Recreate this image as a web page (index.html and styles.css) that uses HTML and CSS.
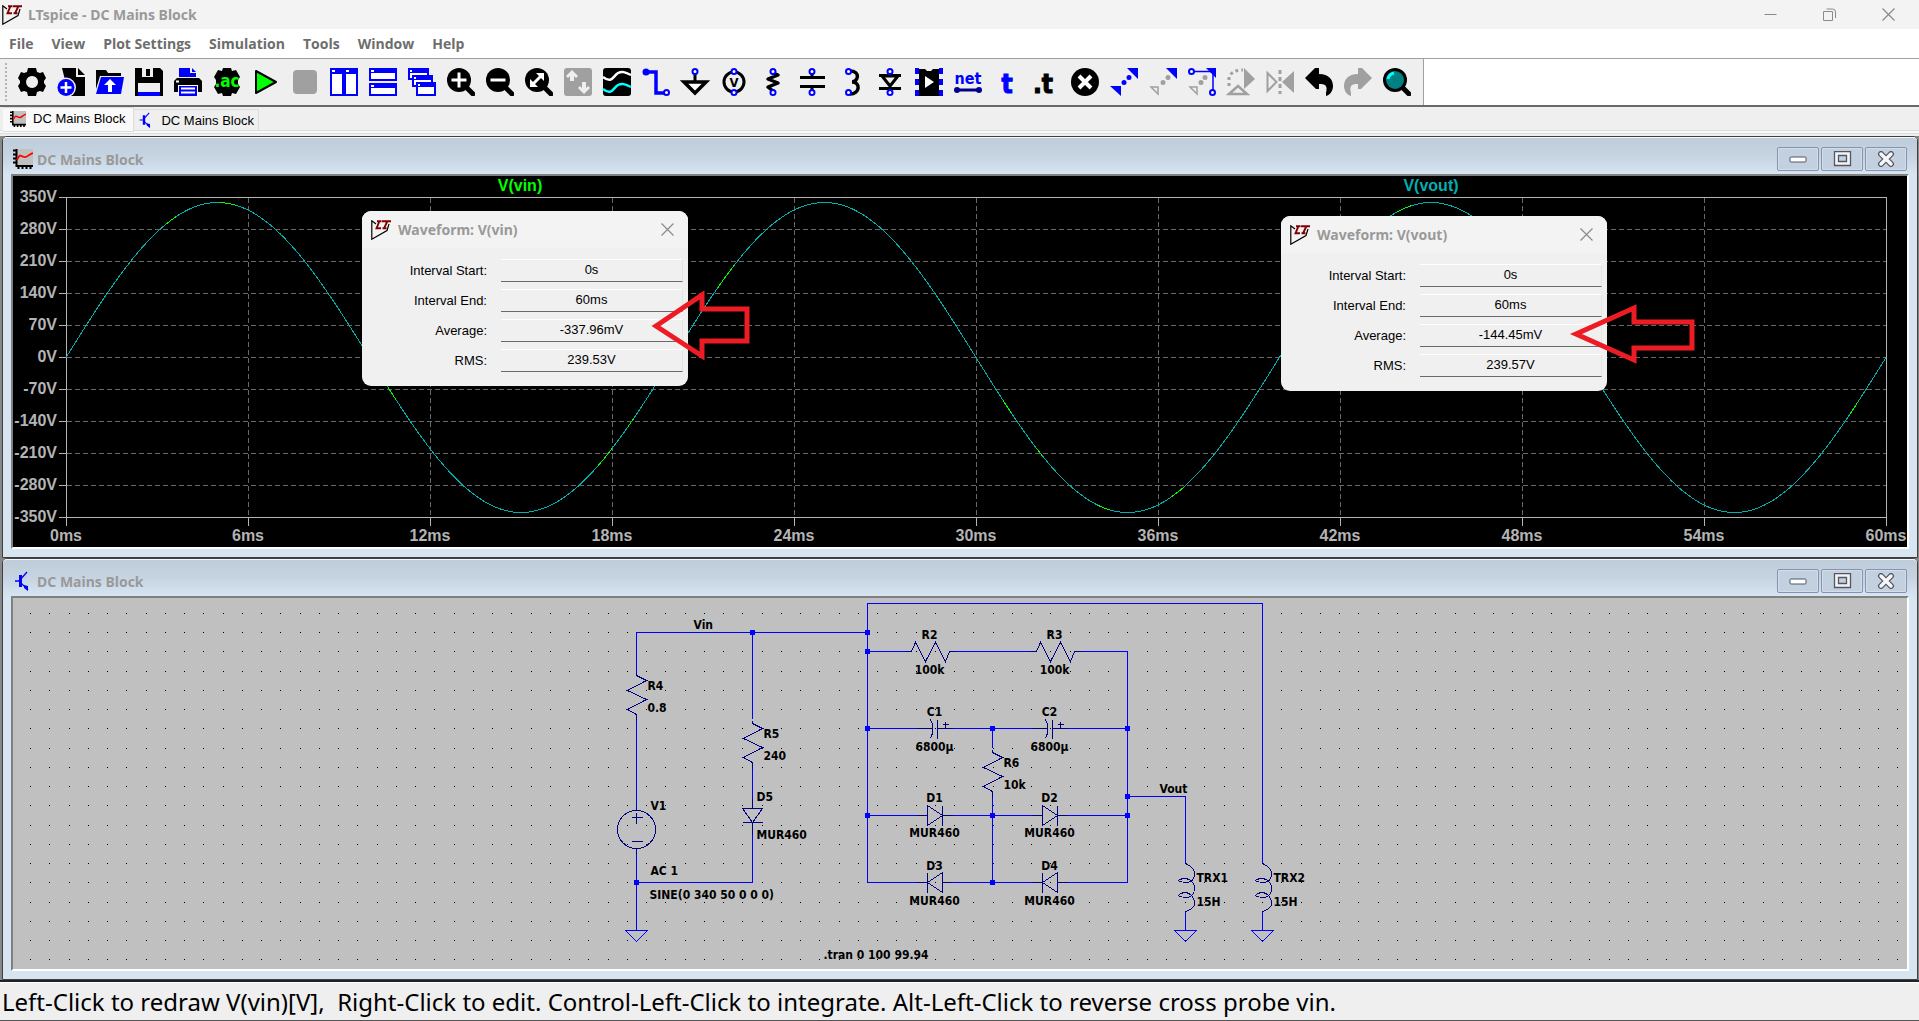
FILE: index.html
```html
<!DOCTYPE html>
<html lang="en">
<head>
  <meta charset="UTF-8">
  <meta name="viewport" content="width=device-width, initial-scale=1.0">
  <title>LTspice - DC Mains Block</title>
  <link rel="stylesheet" href="styles.css">
</head>
<body>
  <!-- Shared symbols -->
  <svg class="defs" width="0" height="0" aria-hidden="true">
    <symbol id="logo" viewBox="0 0 20 20">
      <path d="M5 4L.8.8V19.2L16 10.500 18 4" fill="none" stroke="#000" stroke-width="1.200"/>
      <path d="M6 1.200h4M8.500 1L5.500 8.300H10M10.500 1.200H20M16.500 1L13 8.300M11.500 8.300h4" fill="none" stroke="#800000" stroke-width="1.900"/>
    </symbol>
    <symbol id="icon-wave" viewBox="0 0 20 20">
      <path fill="#c0c0c0" d="M3 0h17v17H3z"/>
      <path d="M3.500 0v17H20M0 1.500h3M0 5.500h3M0 9.500h3M0 13.500h3M5.500 17v3M9.500 17v3M13.500 17v3M17.500 17v3" fill="none" stroke="#000" stroke-width="2"/>
      <path d="M4 11c3-7 4-4 7-3s5-3 9-4" fill="none" stroke="#f00" stroke-width="1.800"/>
    </symbol>
    <symbol id="icon-bjt" viewBox="0 0 20 20">
      <path d="M2 10h5M7 9l7-8M7 11l8 8" fill="none" stroke="#00f" stroke-width="1.300"/>
      <path d="M6 4h3v12H6zM11 14l4 1v5l-4-3z" fill="#00f"/>
    </symbol>
    <symbol id="icon-min" viewBox="0 0 20 16">
      <rect x="2" y="6" width="16" height="5" rx="1" fill="#fff" stroke="#535666"/>
    </symbol>
    <symbol id="icon-max" viewBox="0 0 20 16">
      <path d="M2.500.5h16v14h-16zM6.500 4.500v6h8v-6z" fill="#f4f4f4" fill-rule="evenodd" stroke="#535666" stroke-width="1.300"/>
    </symbol>
    <symbol id="icon-close" viewBox="0 0 20 16">
      <path d="M5 3l10 10M15 3L5 13" stroke="#535666" stroke-width="6" stroke-linecap="round"/>
      <path d="M5 3l10 10M15 3L5 13" stroke="#f7f7f7" stroke-width="3.500" stroke-linecap="round"/>
    </symbol>
    <symbol id="icon-x" viewBox="0 0 13 13">
      <path d="M.5.5l12 12M12.500.5l-12 12" stroke="#8a8a8a" stroke-width="1.200"/>
    </symbol>
    <symbol id="lens" viewBox="0 0 28 28">
      <path d="M18 18l8 8" stroke="#000" stroke-width="5" stroke-linecap="round"/>
      <circle cx="12" cy="12" r="12"/>
    </symbol>
  </svg>

  <header class="titlebar">
    <svg class="logo"><use href="#logo"/></svg>
    <h1>LTspice - DC Mains Block</h1>
    <div class="window-controls">
      <button aria-label="Minimize"><svg width="13" height="13"><path d="M.5 6.500h12" stroke="#8a8a8a"/></svg></button>
      <button aria-label="Restore"><svg width="13" height="13"><path d="M.5 3.500h9v9h-9zM3.500 1h6q3 0 3 3v6" fill="none" stroke="#8a8a8a"/></svg></button>
      <button aria-label="Close"><svg width="13" height="13"><use href="#icon-x"/></svg></button>
    </div>
  </header>

  <nav class="menubar">
    <button>File</button>
    <button>View</button>
    <button>Plot Settings</button>
    <button>Simulation</button>
    <button>Tools</button>
    <button>Window</button>
    <button>Help</button>
  </nav>

  <div class="toolbar-row">
    <div class="toolbar" role="toolbar" aria-label="Main toolbar">
      <button aria-label="Settings"><svg viewBox="0 0 28 28"><path fill-rule="evenodd" d="M10 0h8l1 4 3 1 3-1 3 6-2 3v2l2 3-3 6-3-1-3 1-1 4h-8l-1-4-3-1-3 1-3-6 2-3v-2l-2-3 3-6 3 1 3-1zM14 8a6 6 0 1 0 .1 0z"/></svg></button>
      <button aria-label="New schematic"><svg viewBox="0 0 28 28"><path d="M5 0h14v9h9v19H12z M21 0l7 7h-7z"/><circle cx="9" cy="19.500" r="10" fill="#efefef"/><circle cx="9" cy="19.500" r="8.500" fill="#00f"/><path d="M9 14v11M3.500 19.500h11" stroke="#fff" stroke-width="2.500"/></svg></button>
      <button aria-label="Open"><svg viewBox="0 0 28 28"><path d="M0 2h10l2 3h13v3H4L0 21z"/><path d="M5 9h23l-3 17H0z" fill="#00f"/><path d="M14 11l6 6h-4v7h-4v-7H8z" fill="#fff"/></svg></button>
      <button aria-label="Save"><svg viewBox="0 0 28 28"><path d="M0 0h25l3 3v25H0z"/><path d="M7 0h11v9H7zM3 15h22v10H3z" fill="#efefef"/><path d="M11 1h4v7h-4z"/><path fill="#00f" d="M3 24h22v4H3z"/></svg></button>
      <button aria-label="Print"><svg viewBox="0 0 28 28"><path d="M5 0h11v5h6v4H5zM18 0l4 4h-4z" fill="#00f"/><path d="M3 10h22l3 3v11H0V13z"/><path d="M4 17h20v11H4z" fill="#fff"/><path d="M5 18h18v10H5z" fill="#00f"/><path d="M7 20.500h14M7 24.500h14M2 13.500h3" stroke="#fff" stroke-width="2"/></svg></button>
      <button aria-label="Configure analysis"><svg viewBox="0 0 28 28"><path d="M10 0h8l1 3 4-1 4 7-2 3v4l2 3-4 7-4-1-1 3h-8l-1-3-4 1-4-7 2-3v-4l-2-3 4-7 4 1z"/><text x="14" y="19" class="icon-ac">.ac</text></svg></button>
      <button aria-label="Run"><svg viewBox="0 0 28 28"><path d="M4 3l20 11L4 25z" fill="#0f0" stroke="#000" stroke-width="2" stroke-linejoin="round"/></svg></button>
      <button aria-label="Stop" disabled><svg viewBox="0 0 28 28"><rect x="2" y="2" width="24" height="24" rx="4" fill="#a0a0a0"/></svg></button>
      <button aria-label="Tile vertically"><svg viewBox="0 0 28 28"><path d="M1 1h12v26H1zM15 1h12v26H15z" fill="#fff" stroke="#00f" stroke-width="2"/><path d="M1 1h12v5H1zM15 1h12v5H15z" fill="#00f"/><path d="M2 3h3M16 3h3" stroke="#fff" stroke-width="2"/></svg></button>
      <button aria-label="Tile horizontally"><svg viewBox="0 0 28 28"><path d="M1 1h26v11H1zM1 16h26v11H1z" fill="#fff" stroke="#00f" stroke-width="2"/><path d="M1 1h26v4H1zM1 16h26v4H1z" fill="#00f"/><path d="M2 3h3M2 18h3" stroke="#fff" stroke-width="2"/></svg></button>
      <button aria-label="Cascade"><svg viewBox="0 0 28 28"><g fill="#fff" stroke="#00f" stroke-width="2"><path d="M1 1h19v10H1zM5 8h19v10H5zM9 15h18v12H9z"/></g><path d="M1 1h19v4H1zM5 8h19v4H5zM9 15h18v4H9z" fill="#00f"/><path d="M2 3h2M6 10h2M10 17h2" stroke="#fff" stroke-width="2"/></svg></button>
      <button aria-label="Zoom in"><svg viewBox="0 0 28 28"><use href="#lens"/><path d="M12 4.500v15M4.500 12h15" stroke="#fff" stroke-width="3"/></svg></button>
      <button aria-label="Zoom out"><svg viewBox="0 0 28 28"><use href="#lens"/><path d="M4.500 12h15" stroke="#fff" stroke-width="3"/></svg></button>
      <button aria-label="Zoom to fit"><svg viewBox="0 0 28 28"><use href="#lens"/><path d="M11 5h8v8zM5 11v8h8z" fill="#fff"/><path d="M8 16l8-8" stroke="#fff" stroke-width="3"/></svg></button>
      <button aria-label="Autorange" disabled><svg viewBox="0 0 28 28"><rect width="28" height="28" rx="3" fill="#a0a0a0"/><path d="M8 2l6 6-2 2-2-2v5H6V8l-2 2-2-2zM20 26l6-6-2-2-2 2v-6h-4v6l-2-2-2 2z" fill="#efefef"/></svg></button>
      <button aria-label="Waveform"><svg viewBox="0 0 28 28"><rect width="28" height="28" rx="3"/><path d="M0 9c9 7 10-1 15-4 4-2 7-1 13 2" fill="none" stroke="#fff" stroke-width="2.500"/><path d="M0 21c9 7 10-1 15-4 4-2 7-1 13 2" fill="none" stroke="#0ff" stroke-width="2.500"/></svg></button>
      <button aria-label="Wire"><svg viewBox="0 0 28 28"><path d="M4 4h10v21h9" fill="none" stroke="#00f" stroke-width="3.500"/><circle cx="4" cy="4" r="3.500" fill="#00f"/><circle cx="24.500" cy="24.500" r="2.500" class="pin"/></svg></button>
      <button aria-label="Ground"><svg viewBox="0 0 28 28"><path d="M14 5v9" stroke="#000" stroke-width="3"/><path d="M3 14h22L14 25z" fill="#fff" stroke="#000" stroke-width="3.500"/><circle cx="14" cy="3.500" r="2.500" class="pin"/></svg></button>
      <button aria-label="Voltage source"><svg viewBox="0 0 28 28"><circle cx="14" cy="14" r="10" fill="none" stroke="#000" stroke-width="3"/><text x="14" y="19" class="icon-v">V</text><circle cx="14" cy="3.500" r="2.500" class="pin"/><circle cx="14" cy="24.500" r="2.500" class="pin"/></svg></button>
      <button aria-label="Resistor"><svg viewBox="0 0 28 28"><path d="M14 5l5 2-10 4 10 4-10 4 5 4" fill="none" stroke="#000" stroke-width="3.500" stroke-linejoin="round"/><circle cx="14" cy="3.500" r="2.500" class="pin"/><circle cx="14" cy="24.500" r="2.500" class="pin"/></svg></button>
      <button aria-label="Capacitor"><svg viewBox="0 0 28 28"><path d="M14 5v5M14 18v5M2 9.500h25M2 18.500h25" stroke="#000" stroke-width="3"/><circle cx="14" cy="3.500" r="2.500" class="pin"/><circle cx="14" cy="24.500" r="2.500" class="pin"/></svg></button>
      <button aria-label="Inductor"><svg viewBox="0 0 28 28"><path d="M13 3c11 0 8 11 2 11 9 0 8 12-2 12" fill="none" stroke="#000" stroke-width="3.500"/><circle cx="11.500" cy="3.500" r="2.500" class="pin"/><circle cx="11.500" cy="24.500" r="2.500" class="pin"/></svg></button>
      <button aria-label="Diode"><svg viewBox="0 0 28 28"><path d="M3 7.500h22M3 20.500h22" stroke="#000" stroke-width="3"/><path d="M6 8h16l-8 10z" fill="#efefef" stroke="#000" stroke-width="3"/><circle cx="14" cy="3.500" r="2.500" class="pin"/><circle cx="14" cy="24.500" r="2.500" class="pin"/></svg></button>
      <button aria-label="Component"><svg viewBox="0 0 28 28"><path d="M2 0v28M26 0v28" stroke="#00f" stroke-width="4" stroke-dasharray="6 5"/><path d="M4 1h6l2 2h4l2-2h6v27H4z"/><path d="M10 8l9 6-9 6z" fill="#fff"/></svg></button>
      <button aria-label="Net name"><svg viewBox="0 0 28 28"><text x="14" y="16" class="icon-net">net</text><path d="M3 22h22" stroke="#00008b" stroke-width="3"/><circle cx="3" cy="22" r="3" fill="#00008b"/><circle cx="25" cy="22" r="3" fill="#00008b"/></svg></button>
      <button aria-label="Text"><svg viewBox="0 0 28 28"><text x="14" y="25" class="icon-t blue">t</text></svg></button>
      <button aria-label="SPICE directive"><svg viewBox="0 0 28 28"><text x="11" y="25" class="icon-t">.t</text></svg></button>
      <button aria-label="Delete"><svg viewBox="0 0 28 28"><circle cx="14" cy="14" r="14"/><path d="M8 8l12 12M20 8L8 20" stroke="#fff" stroke-width="4"/></svg></button>
      <button aria-label="Duplicate"><svg viewBox="0 0 28 28"><path d="M17 0h11v11zM0 18h11v10z" fill="#00f"/><g fill="#00f"><circle cx="19" cy="9.500" r="2.500"/><circle cx="14" cy="14.500" r="2.500"/></g></svg></button>
      <button aria-label="Move"><svg viewBox="0 0 28 28"><path d="M17 0h11v11z" fill="#00f"/><path d="M2 19h7v7z" fill="none" stroke="#a0a0a0" stroke-width="1.500"/><g fill="#a0a0a0"><circle cx="19" cy="9.500" r="2.500"/><circle cx="14" cy="14.500" r="2.500"/></g></svg></button>
      <button aria-label="Drag"><svg viewBox="0 0 28 28"><path d="M18 0h10v10z" fill="#00f"/><path d="M4 3.500h21v20" fill="none" stroke="#00f" stroke-width="1.500"/><path d="M2 19h7v7z" fill="none" stroke="#a0a0a0" stroke-width="1.500"/><g fill="#a0a0a0"><circle cx="17" cy="9.500" r="2.500"/><circle cx="13" cy="14.500" r="2.500"/></g><circle cx="3.500" cy="3.500" r="2.500" class="pin"/><circle cx="24.500" cy="24.500" r="2.500" class="pin"/></svg></button>
      <button aria-label="Rotate" disabled><svg viewBox="0 0 28 28"><path d="M17 0l11 11-11 10z" fill="#a0a0a0"/><path d="M2 18V9q3-7 14-7" fill="none" stroke="#a0a0a0" stroke-width="3" stroke-dasharray="3 3"/><path d="M2 26l9-8 9 8z" fill="none" stroke="#a0a0a0" stroke-width="2.500"/></svg></button>
      <button aria-label="Mirror" disabled><svg viewBox="0 0 28 28"><path d="M28 3v22L16 14z" fill="#a0a0a0"/><path d="M1.500 5v18l9-9z" fill="none" stroke="#a0a0a0" stroke-width="2"/><path d="M14 2v24" stroke="#a0a0a0" stroke-width="3" stroke-dasharray="4 3"/></svg></button>
      <button aria-label="Undo"><svg viewBox="0 0 28 28"><path d="M0 10L10 0h4v6c10 0 14 6 14 12 0 5-3 9-7 10v-3c2-8-1-9-7-9v5h-3z"/></svg></button>
      <button aria-label="Redo" disabled><svg viewBox="0 0 28 28"><path d="M28 10L18 0h-4v6C4 6 0 12 0 18c0 5 3 9 7 10v-3c-2-8 1-9 7-9v5h3z" fill="#a0a0a0"/></svg></button>
      <button aria-label="Search"><svg viewBox="0 0 28 28"><use href="#lens"/><circle cx="12" cy="12" r="9" fill="#008080"/><path d="M5 11q1-5 6-6" fill="none" stroke="#0ff" stroke-width="3"/></svg></button>
    </div>
  </div>

  <div class="tabs" role="tablist">
    <button class="tab active" role="tab" aria-selected="true"><svg><use href="#icon-wave"/></svg>DC Mains Block</button>
    <button class="tab" role="tab" aria-selected="false"><svg><use href="#icon-bjt"/></svg>DC Mains Block</button>
  </div>

  <main class="mdi">
    <section class="window">
      <div class="window-title">
        <svg class="window-icon"><use href="#icon-wave"/></svg>
        <h2>DC Mains Block</h2>
        <div class="window-buttons">
          <button aria-label="Minimize"><svg><use href="#icon-min"/></svg></button>
          <button aria-label="Maximize"><svg><use href="#icon-max"/></svg></button>
          <button aria-label="Close"><svg><use href="#icon-close"/></svg></button>
        </div>
      </div>
      <div class="window-body">
        <svg id="plot" class="plot" viewBox="13 176 1894 371">
          <text x="520" y="191" class="vin">V(vin)</text>
          <text x="1431" y="191" class="vout">V(vout)</text>
          <g id="grid"></g>
          <g id="waves"></g>
        </svg>

        <div class="dialog dialog-vin" role="dialog" aria-labelledby="dlgVin">
          <div class="dialog-title">
            <svg class="logo"><use href="#logo"/></svg>
            <h3 id="dlgVin">Waveform: V(vin)</h3>
            <button aria-label="Close"><svg width="13" height="13"><use href="#icon-x"/></svg></button>
          </div>
          <div class="dialog-body">
            <label for="vinStart">Interval Start:</label><input id="vinStart" value="0s" readonly>
            <label for="vinEnd">Interval End:</label><input id="vinEnd" value="60ms" readonly>
            <label for="vinAvg">Average:</label><input id="vinAvg" value="-337.96mV" readonly>
            <label for="vinRms">RMS:</label><input id="vinRms" value="239.53V" readonly>
          </div>
        </div>

        <div class="dialog dialog-vout" role="dialog" aria-labelledby="dlgVout">
          <div class="dialog-title">
            <svg class="logo"><use href="#logo"/></svg>
            <h3 id="dlgVout">Waveform: V(vout)</h3>
            <button aria-label="Close"><svg width="13" height="13"><use href="#icon-x"/></svg></button>
          </div>
          <div class="dialog-body">
            <label for="voutStart">Interval Start:</label><input id="voutStart" value="0s" readonly>
            <label for="voutEnd">Interval End:</label><input id="voutEnd" value="60ms" readonly>
            <label for="voutAvg">Average:</label><input id="voutAvg" value="-144.45mV" readonly>
            <label for="voutRms">RMS:</label><input id="voutRms" value="239.57V" readonly>
          </div>
        </div>

        <svg class="arrows" viewBox="13 176 1894 371">
          <path d="M656 326l46-31v14h45v32h-45v15z"/>
          <path d="M1576 334l58-26v14h58v26h-58v12z"/>
        </svg>
      </div>
    </section>

    <section class="window">
      <div class="window-title">
        <svg class="window-icon"><use href="#icon-bjt"/></svg>
        <h2>DC Mains Block</h2>
        <div class="window-buttons">
          <button aria-label="Minimize"><svg><use href="#icon-min"/></svg></button>
          <button aria-label="Maximize"><svg><use href="#icon-max"/></svg></button>
          <button aria-label="Close"><svg><use href="#icon-close"/></svg></button>
        </div>
      </div>
      <div class="window-body">
        <svg class="schematic" viewBox="12.500 597.500 1894 371">
          <g id="dots"></g>

          <g class="wire">
            <path d="M636 672V632H867M752 632V718M752 834V882H636V853M636 882V930M636 806V720M752 768V798"/>
            <path d="M867 882V603H1262V863M867 651H905M955 651H1030M1080 651H1127V882M867 728H916M952 728H1031M1067 728H1127"/>
            <path d="M867 815H916M952 815H1031M1067 815H1127M867 882H916M952 882H1031M1067 882H1127"/>
            <path d="M992 728V747M992 796V882M1127 796H1185V863M1185 911V930M1262 911V930"/>
            <path id="gnd" d="M625 930H647L636 941z"/>
            <use href="#gnd" x="549"/>
            <use href="#gnd" x="626"/>
          </g>

          <g class="part">
            <!-- resistors -->
            <path id="resV" d="M636 672V675L646 680 627 690 646 699 627 709 636 714V720"/>
            <use href="#resV" x="116" y="48"/>
            <use href="#resV" x="356" y="77"/>
            <path id="resH" d="M905 651H911L915 642 925 661 935 642 945 661 949 651H955"/>
            <use href="#resH" x="125"/>
            <!-- source -->
            <circle cx="636" cy="829" r="19"/>
            <path d="M636 806V810M636 848V853M631 817H642M636 812V823M631 841H642"/>
            <!-- capacitors -->
            <path id="cap" d="M916 728H932M937 728H952M937 719V738M930 719Q935 728 930 738M942 724H948M945 721V727"/>
            <use href="#cap" x="115"/>
            <!-- diodes -->
            <path d="M752 798V808M752 822V834M742 808H762L752 822zM742 822H762"/>
            <path id="diode" d="M916 815H927M942 815H952M927 805V825L942 815zM942 805V825"/>
            <use href="#diode" x="115"/>
            <path id="diodeR" d="M916 882H927M942 882H952M942 872V892L927 882zM927 872V892"/>
            <use href="#diodeR" x="115"/>
            <!-- inductors -->
            <path id="ind" d="M1185 863Q1194 867 1194 873 1194 882 1185 882 1178 881 1178 880 1180 878 1186 878C1192 880 1194 884 1194 888 1194 894 1190 897 1185 897Q1178 896 1178 895 1180 892 1186 892C1192 894 1194 898 1194 903Q1194 908 1185 911"/>
            <use href="#ind" x="77"/>
          </g>

          <g id="nodes" class="nodes"></g>

          <g class="labels">
            <text x="693" y="628">Vin</text>
            <text x="647" y="689">R4</text>
            <text x="647" y="711">0.8</text>
            <text x="763" y="737">R5</text>
            <text x="763" y="759">240</text>
            <text x="756" y="800">D5</text>
            <text x="756" y="838">MUR460</text>
            <text x="650" y="809">V1</text>
            <text x="650" y="874">AC 1</text>
            <text x="649" y="898">SINE(0 340 50 0 0 0)</text>
            <text x="823" y="958">.tran 0 100 99.94</text>
            <text x="1003" y="766">R6</text>
            <text x="1003" y="788">10k</text>
            <text x="1159" y="792">Vout</text>
            <text x="1196" y="881">TRX1</text>
            <text x="1196" y="905">15H</text>
            <text x="1273" y="881">TRX2</text>
            <text x="1273" y="905">15H</text>
          </g>
          <g class="labels centered">
            <text x="929" y="638">R2</text>
            <text x="929" y="673">100k</text>
            <text x="1054" y="638">R3</text>
            <text x="1054" y="673">100k</text>
            <text x="934" y="715">C1</text>
            <text x="934" y="750">6800µ</text>
            <text x="1049" y="715">C2</text>
            <text x="1049" y="750">6800µ</text>
            <text x="934" y="801">D1</text>
            <text x="934" y="836">MUR460</text>
            <text x="1049" y="801">D2</text>
            <text x="1049" y="836">MUR460</text>
            <text x="934" y="869">D3</text>
            <text x="934" y="904">MUR460</text>
            <text x="1049" y="869">D4</text>
            <text x="1049" y="904">MUR460</text>
          </g>
        </svg>
      </div>
    </section>
  </main>

  <footer class="statusbar">Left-Click to redraw V(vin)[V],&nbsp; Right-Click to edit. Control-Left-Click to integrate. Alt-Left-Click to reverse cross probe vin.</footer>

  <script>
    // plot area: 0..60ms across, +350V..-350V down
    const left = 66, right = 1886, top0 = 197, bottom = 517;
    const stepX = (right - left) / 10;
    const stepY = (bottom - top0) / 10;

    function line(x1, y1, x2, y2, cls) {
      return `<path class="${cls}" d="M${x1 + 0.5} ${y1 + 0.5}L${x2 + 0.5} ${y2 + 0.5}"/>`;
    }

    function drawGrid() {
      let out = '';
      for (let i = 0; i <= 10; i++) {
        const x = left + i * stepX;
        const y = top0 + i * stepY;
        if (i > 0 && i < 10) {
          out += line(x, top0, x, bottom, 'dash');
          out += line(left, y, right, y, 'dash');
        }
        out += line(x, bottom, x, bottom + 8, 'axis');
        out += line(left - 8, y, left, y, 'axis');
        out += `<text class="volt" x="57" y="${y + 5}">${350 - i * 70}V</text>`;
        out += `<text class="time" x="${x}" y="541">${i * 6}ms</text>`;
      }
      out += `<rect class="axis" x="${left + 0.5}" y="${top0 + 0.5}" width="${right - left}" height="${bottom - top0}"/>`;
      document.getElementById('grid').innerHTML = out;
    }

    function sine(from, to, cls) {
      const pts = [];
      for (let x = from; x <= to; x += 2) {
        const ms = (x - left) / stepX * 6;
        pts.push(`${x} ${(357.5 - 155 * Math.sin(ms / 20 * 2 * Math.PI)).toFixed(1)}`);
      }
      return `<path class="${cls}" d="M${pts.join('L')}"/>`;
    }

    function drawWaves() {
      // short spans where V(vin) shows through V(vout)
      const spans = [[166, 176], [220, 236], [388, 396], [598, 612], [628, 634], [718, 735], [1003, 1011], [1036, 1042], [1098, 1110], [1172, 1184], [1397, 1411], [1850, 1858]];
      let out = sine(left, right, 'wave-vout');
      spans.forEach(s => out += sine(s[0], s[1], 'wave-vin'));
      document.getElementById('waves').innerHTML = out;
    }

    function drawDots() {
      let d = '';
      for (let i = 0; i < 98; i++) {
        for (let j = 0; j < 19; j++) {
          d += `M${Math.floor(30.6 + i * 19.25) - 0.5} ${Math.floor(613.3 + j * 19.25) - 0.5}h1v1h-1z`;
        }
      }
      document.getElementById('dots').innerHTML = `<path d="${d}"/>`;
    }

    function drawNodes() {
      const nodes = [[752, 632], [867, 632], [867, 651], [867, 728], [867, 815], [636, 882], [992, 728], [992, 815], [992, 882], [1127, 728], [1127, 796], [1127, 815]];
      document.getElementById('nodes').innerHTML = nodes
        .map(n => `<rect x="${n[0] - 2.5}" y="${n[1] - 2.5}" width="5" height="5"/>`).join('');
    }

    drawGrid();
    drawWaves();
    drawDots();
    drawNodes();
  </script>
</body>
</html>
```
FILE: styles.css
```css
:root {
  --ui-font: "Noto Sans", "Open Sans", sans-serif;
  --caption-font: "Open Sans", "Noto Sans", sans-serif;
  --small-font: "Liberation Sans", Arial, sans-serif;
  --schematic-font: "DejaVu Sans Condensed", "DejaVu Sans", sans-serif;
  --face: #efefef;
  --caption: #999999;
  --frame: #d7e4f2;
  --dark: #404040;
}

* {
  box-sizing: border-box;
  margin: 0;
  padding: 0;
}

body {
  display: flex;
  flex-direction: column;
  min-height: 100vh;
  background: var(--face);
  font-family: var(--ui-font);
}

svg {
  display: block;
}

button {
  background: none;
  border: none;
  font: inherit;
  color: inherit;
}

.defs {
  position: absolute;
}

.logo {
  width: 20px;
  height: 20px;
}

/* Main title bar */
.titlebar {
  display: flex;
  align-items: center;
  height: 29px;
  padding: 0 1px 0 2px;
  background: #f3f3f3;
  color: var(--caption);
}

.titlebar h1 {
  margin-left: 6px;
  font-size: 14px;
  font-weight: 700;
}

.window-controls {
  display: flex;
  margin-left: auto;
}

.window-controls button {
  display: flex;
  align-items: center;
  justify-content: center;
  width: 59px;
  height: 29px;
}

.menubar {
  display: flex;
  gap: 18px;
  height: 30px;
  padding: 0 9px;
  background: #fff;
  border-bottom: 1px solid #a0a0a0;
  color: #6d6d6d;
  font-family: var(--caption-font);
  font-size: 14px;
  font-weight: 700;
}

/* Toolbar */
.toolbar-row {
  display: flex;
  height: 48px;
  background: #fff;
  border-bottom: 2px solid #696969;
}

.toolbar {
  display: flex;
  align-items: center;
  gap: 11px;
  padding: 0 12px 0 5px;
  background: var(--face);
  border-right: 1px solid #a0a0a0;
}

.toolbar::before {
  content: "";
  width: 2px;
  height: 38px;
  background: repeating-linear-gradient(#b4b4b4 0 2px, transparent 2px 4px);
}

.toolbar svg {
  width: 28px;
  height: 28px;
  overflow: visible;
}

.toolbar .pin {
  fill: #fff;
  stroke: #00f;
  stroke-width: 2;
}

.toolbar text {
  font-family: var(--schematic-font);
  font-weight: 700;
  text-anchor: middle;
}

.toolbar .icon-ac {
  font-size: 17px;
  fill: #0f0;
}

.toolbar .icon-v {
  font-size: 13px;
}

.toolbar .icon-net {
  font-size: 16px;
  fill: #00f;
}

.toolbar .icon-t {
  font-size: 26px;
  stroke: #000;
}

.toolbar .blue {
  fill: #00f;
  stroke: #00f;
}

/* Document tabs */
.tabs {
  display: flex;
  align-items: flex-start;
  height: 29px;
  padding: 0 3px;
  font-family: var(--small-font);
  font-size: 13px;
  background: linear-gradient(var(--face) 23px, #dcdcdc 23px 24px, #f9f9f9 24px 26px, #dcdcdc 26px 27px, var(--face) 27px);
}

.tab {
  display: flex;
  align-items: center;
  gap: 7px;
  height: 22px;
  margin-top: 2px;
  padding: 0 4px;
  border: 1px solid #dcdcdc;
  border-left: none;
}

.tab.active {
  height: 25px;
  margin-top: 0;
  padding: 0 8px 2px 7px;
  background: #f9f9f9;
}

.tab svg {
  width: 16px;
  height: 16px;
}

/* MDI area */
.mdi {
  padding: 0 1px 0 2px;
  border-bottom: 2px solid #222;
  background: #888;
}

.window {
  border: 1px solid var(--dark);
  border-radius: 5px 5px 0 0;
  background: var(--frame);
  padding: 0 8px 8px;
}

.window-title {
  display: flex;
  align-items: center;
  height: 37px;
  margin: 0 -8px;
  padding: 8px 10px 2px;
  background: linear-gradient(#bfcddb, #c6d4e2 50%, var(--frame));
  border-top: 1px solid #f4f8fc;
  border-radius: 4px 4px 0 0;
  color: var(--caption);
}

.window-icon {
  width: 20px;
  height: 20px;
}

.window-title h2 {
  margin-left: 4px;
  font-size: 14px;
  font-weight: 700;
}

.window-buttons {
  display: flex;
  gap: 2px;
  margin-left: auto;
}

.window-buttons button {
  display: flex;
  align-items: center;
  justify-content: center;
  width: 42px;
  height: 24px;
  border: 1px solid #8592b0;
  border-radius: 2px;
  background: #c3d0df;
  box-shadow: inset 0 0 0 1px #d3deea;
}

.window-buttons svg {
  width: 20px;
  height: 16px;
}

.window-body {
  position: relative;
  border: 2px solid;
  border-color: #808080 #fff #fff #808080;
}

/* Waveform plot */
.plot {
  width: 100%;
  height: auto;
  background: #000;
  font-family: var(--small-font);
  font-size: 16px;
  font-weight: 700;
  fill: #b4b4b4;
}

.plot .vin,
.plot .vout,
.plot .time {
  text-anchor: middle;
}

.plot .vin {
  fill: #0f0;
}

.plot .vout {
  fill: #00b0b0;
}

.plot .volt {
  text-anchor: end;
}

.plot .axis,
.plot .dash {
  fill: none;
  stroke: #b4b4b4;
  shape-rendering: crispEdges;
}

.plot .dash {
  stroke: #686868;
  stroke-dasharray: 5 3;
}

.wave-vout,
.wave-vin {
  fill: none;
  stroke: #00b0b0;
  shape-rendering: crispEdges;
}

.wave-vin {
  stroke: #0f0;
}

.arrows {
  position: absolute;
  top: 0;
  left: 0;
  width: 100%;
  height: 100%;
  fill: none;
  stroke: #ed1c24;
  stroke-width: 5;
  pointer-events: none;
}

/* Waveform summary dialogs */
.dialog {
  position: absolute;
  width: 326px;
  border-radius: 9px;
  background: #f0f0f0;
  overflow: hidden;
}

.dialog-vin {
  top: 35px;
  left: 349px;
}

.dialog-vout {
  top: 40px;
  left: 1268px;
}

.dialog-title {
  display: flex;
  align-items: center;
  height: 37px;
  padding: 0 14px 0 9px;
  background: #f3f3f3;
  color: var(--caption);
}

.dialog-title h3 {
  margin-left: 7px;
  font-size: 14px;
  font-weight: 700;
}

.dialog-title button {
  margin-left: auto;
}

.dialog-body {
  display: grid;
  grid-template-columns: 1fr 182px;
  gap: 7px 14px;
  padding: 11px 5px 14px;
  font-family: var(--small-font);
  font-size: 13px;
}

.dialog-body label {
  line-height: 23px;
  height: 23px;
  text-align: right;
}

.dialog-body input {
  width: 100%;
  height: 23px;
  padding-bottom: 2px;
  border: solid;
  border-width: 1px 1px 1px 0;
  border-color: #fff #e3e3e3 #696969 #e3e3e3;
  background: #f0f0f0;
  font: inherit;
  text-align: center;
  outline: none;
}

/* Schematic */
.schematic {
  width: 100%;
  height: auto;
  background: #c0c0c0;
}

.wire,
.part {
  fill: none;
  stroke: #00f;
  shape-rendering: crispEdges;
}

.part {
  stroke: #000080;
}

.nodes {
  fill: #00f;
}

.labels {
  font-family: var(--schematic-font);
  font-size: 12px;
  font-weight: 700;
}

.centered {
  text-anchor: middle;
}

.statusbar {
  flex: 1;
  padding: 0 2px;
  border-top: 1px solid #fff;
  border-bottom: 1px solid #555;
  font-size: 24px;
  line-height: 37px;
  white-space: nowrap;
}
```
